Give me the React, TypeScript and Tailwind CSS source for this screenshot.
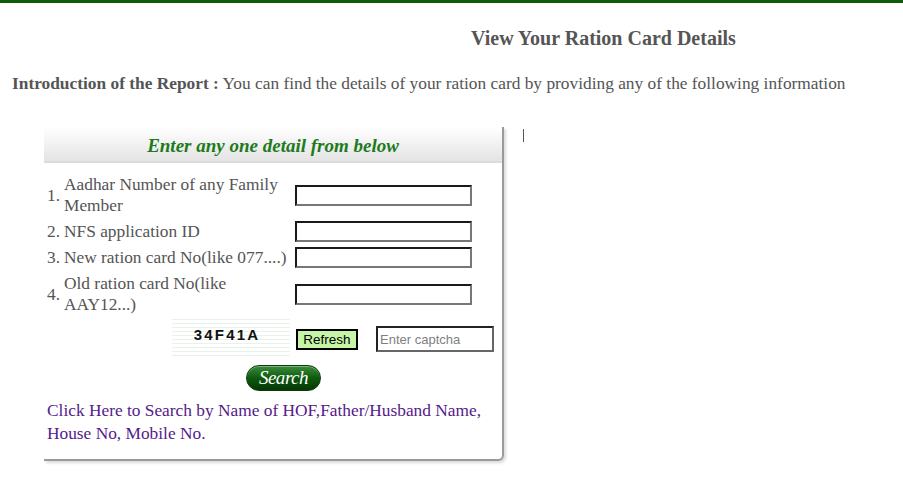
import { useState } from 'react';

const serif = "font-['Liberation_Serif','Times_New_Roman',serif]";
const sans = "font-['Liberation_Sans',Arial,sans-serif]";

const inputClass =
  'h-[21px] w-[177px] border-2 border-t-[#1a1a1a] border-l-[#1a1a1a] border-b-[#777] border-r-[#777] bg-white px-1 text-sm outline-none';

function FieldRow({ num, label, value, onChange }: { num: string; label: string; value: string; onChange: (v: string) => void }) {
  return (
    <>
      <div className="self-center leading-[21px]">{num}</div>
      <div className="self-center leading-[21px]">{label}</div>
      <div className="flex self-center">
        <input value={value} onChange={(e) => onChange(e.target.value)} className={inputClass} />
      </div>
    </>
  );
}

export default function App() {
  const [vals, setVals] = useState(['', '', '', '']);
  const [captcha, setCaptcha] = useState('');

  const set = (i: number) => (v: string) => setVals((p) => p.map((x, j) => (j === i ? v : x)));

  return (
    <div className={`min-h-[504px] w-[903px] bg-white ${serif} text-[#555]`}>
      <div className="h-[3px] bg-[#0b5d0b]" />

      <h1 className="ml-[471px] mt-[23px] text-[20px] font-bold leading-[24px] text-[#555]">
        View Your Ration Card Details
      </h1>

      <p className="ml-[12px] mt-[23px] text-[17.35px] leading-[22px]">
        <span className="font-bold">Introduction of the Report :</span> You can find the details of your ration card by
        providing any of the following information
      </p>

      <div className="mt-[32px] flex items-start">
        <div className="ml-[44px] w-[460px] rounded-br-[6px] border-b-2 border-r-2 border-[#9a9a9a] bg-white pb-[14px] shadow-[2px_2px_3px_rgba(0,0,0,0.15)]">
          <div className="flex h-[36px] items-center justify-center border-b-2 border-[#dcdcdc] bg-gradient-to-b from-white to-[#e4e4e4] pt-[5px]">
            <span className="text-[19px] font-bold italic text-[#1d7a1d]">Enter any one detail from below</span>
          </div>

          <div className="ml-[3px] mt-[11px] grid grid-cols-[17px_231px_auto] gap-y-[5px] text-[17.35px] text-[#555]">
            <FieldRow num="1." label="Aadhar Number of any Family Member" value={vals[0]} onChange={set(0)} />
            <FieldRow num="2." label="NFS application ID" value={vals[1]} onChange={set(1)} />
            <FieldRow num="3." label="New ration card No(like 077....)" value={vals[2]} onChange={set(2)} />
            <FieldRow num="4." label="Old ration card No(like AAY12...)" value={vals[3]} onChange={set(3)} />
          </div>

          <div className="mt-[4px] flex items-center">
            <div className="ml-[128px] flex h-[38px] w-[118px] items-start justify-center bg-[repeating-linear-gradient(to_bottom,#e6f2ea_0px,#e6f2ea_1px,#ffffff_1px,#ffffff_4px)] pt-[5px]">
              <span className={`${sans} ml-[-8px] text-[15px] font-black tracking-[2.2px] text-[#111]`}>34F41A</span>
            </div>
            <button
              className={`${sans} ml-[6px] mt-[3px] h-[21px] w-[62px] border-2 border-black bg-[#c6f5a8] text-[13.5px] leading-none text-black`}
            >
              Refresh
            </button>
            <input
              value={captcha}
              onChange={(e) => setCaptcha(e.target.value)}
              placeholder="Enter captcha"
              className={`${sans} ml-[18px] mt-[2px] h-[26px] w-[118px] border-2 border-t-[#222] border-l-[#222] border-b-[#666] border-r-[#666] px-[2px] text-[13px] text-[#333] outline-none placeholder:text-[#808080]`}
            />
          </div>

          <div className="mt-[8px] flex">
            <button className="ml-[202px] flex h-[26px] w-[75px] items-center justify-center rounded-full border border-[#0a3a0a] bg-gradient-to-b from-[#3b8c3b] via-[#0d5a0d] to-[#063806] pb-[1px] text-[19px] italic leading-none tracking-tight text-white shadow-[inset_0_1px_0_rgba(255,255,255,0.35)]">
              Search
            </button>
          </div>

          <a href="#" className="ml-[3px] mt-[8px] block w-[450px] text-[17.35px] leading-[23px] text-[#551a8b]">
            Click Here to Search by Name of HOF,Father/Husband Name, House No, Mobile No.
          </a>
        </div>

        <div className="ml-[19px] mt-[2px] h-[13px] w-px bg-[#555]" />
      </div>
    </div>
  );
}
